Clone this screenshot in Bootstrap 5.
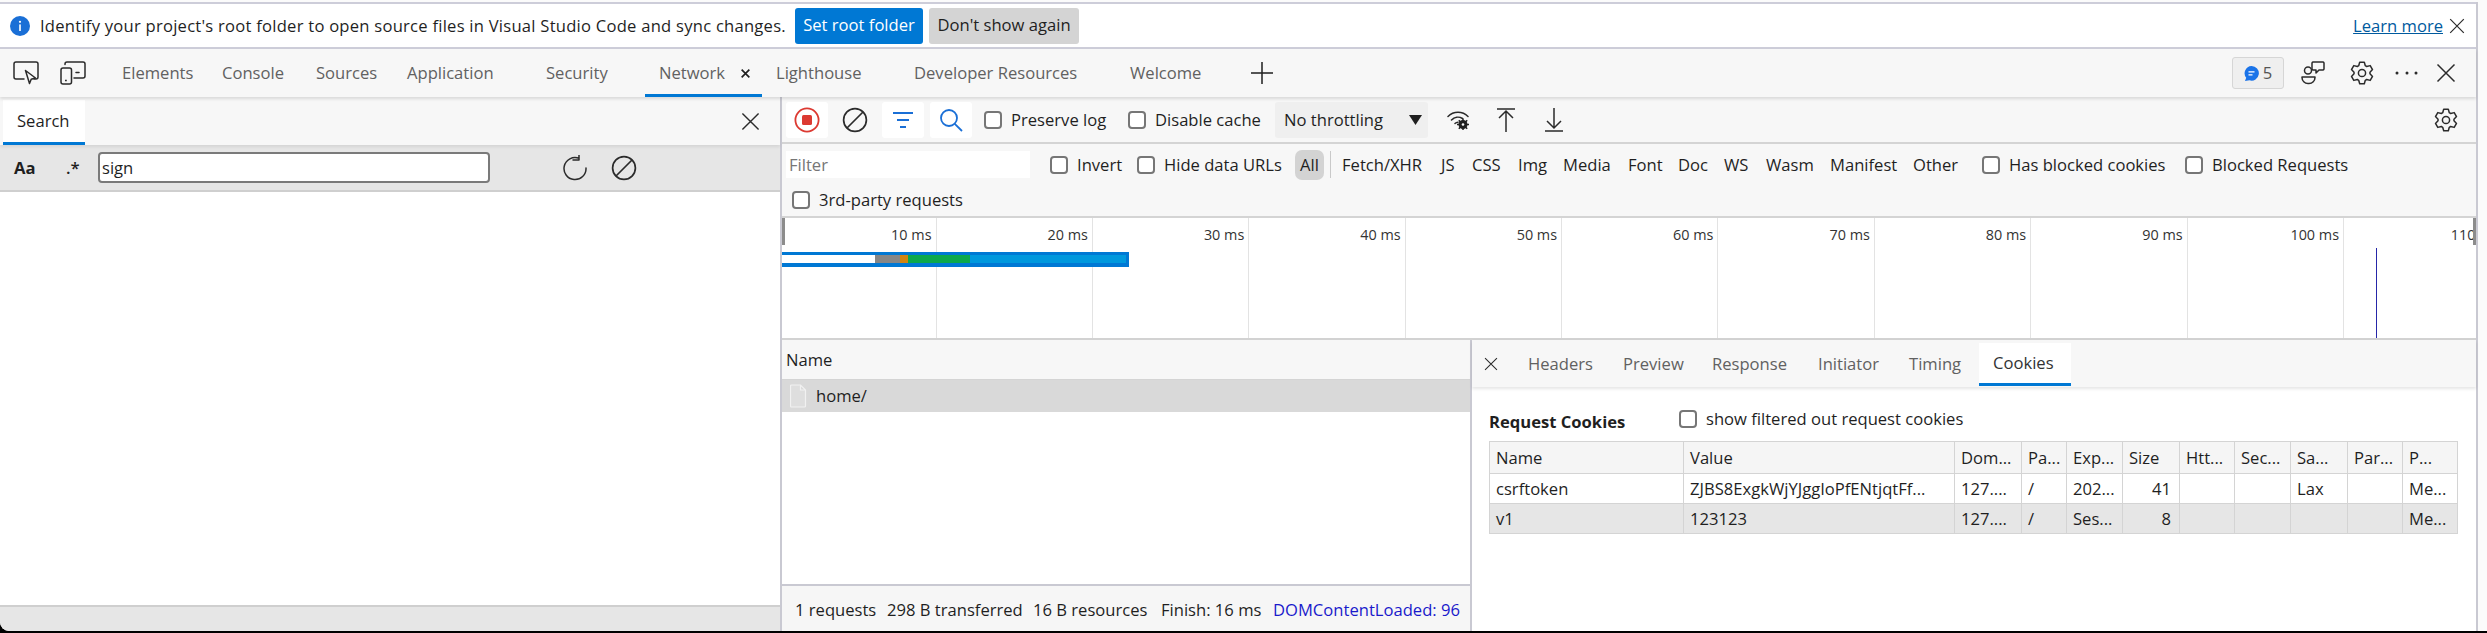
<!DOCTYPE html>
<html lang="en">
<head>
<meta charset="utf-8">
<title>DevTools</title>
<link rel="stylesheet" href="https://cdn.jsdelivr.net/npm/bootstrap@5.3.0/dist/css/bootstrap.min.css">
<style>
html,body{height:633px;overflow:hidden}
body{background:#000;font-family:"Open Sans","Liberation Sans",sans-serif;font-size:16.6px;color:#1f1f1f;line-height:1.2}
.canvas{width:2487px;height:631px;background:#fbfbfb;border-bottom-left-radius:9px;overflow:hidden}
.tool{width:2478px;height:629px;border-right:2px solid #c9c9d2;margin-top:2px;display:flex;flex-direction:column}
.nw{white-space:nowrap}
.infobar{height:47px;background:#fff;border-top:2px solid #cdcdd9;border-bottom:2px solid #cdcdd9;padding-left:10px;flex:none}
.info-txt{width:755px;margin-left:10px;letter-spacing:.24px}
.btn.act-main,.btn.act-sec{height:36px;padding:0;border:0;border-radius:3px;font-size:16.6px;color:#fff;background:#0078d4}
.btn.act-main{width:128px;margin-right:6px}
.btn.act-sec{width:150px;background:#d4d4d4;color:#1f1f1f}
.learn{color:#005a9e;text-decoration:underline;margin-right:6px}
.infox{margin-right:11px}
.tabstrip{height:48px;background:#f7f7f7;padding-left:13px;box-shadow:0 2px 3px rgba(0,0,0,.12);position:relative;z-index:2;flex:none}
.dtab{color:#616161;height:100%;display:flex;align-items:center;white-space:nowrap;flex:none}
.w47{width:47px}.w62{width:62px}.w100{width:100px}.w94{width:94px}.w91{width:91px}.w139{width:139px}.w99{width:99px}.w138{width:138px}.w216{width:216px}.w121{width:121px}
.dtab-on{width:117px;padding-left:14px;margin-right:14px;border-bottom:3px solid #0078d4;padding-top:3px;justify-content:space-between;padding-right:11px}
.issue-box{width:52px;height:32px;background:#efefef;border:1px solid #d6d6d6;border-radius:3px;color:#555}
.ml17{margin-left:17px}.ml25{margin-left:25px}.ml20{margin-left:20px}.ml18{margin-left:18px}
.mr20{margin-right:20px}.mr18{margin-right:18px}
.panes{flex:1;min-height:0}
.leftpane{width:780px;flex:none}
.striph{height:48px;background:#f7f7f7;padding-left:3px;padding-right:20px;box-shadow:0 2px 3px rgba(0,0,0,.08);position:relative;z-index:1;flex:none}
.search-tab{width:82px;height:45px;background:#fff;margin-top:3px;border-bottom:3px solid #0078d4;padding-left:14px;display:flex;align-items:center}
.searchbar{height:47px;background:#e6e6e6;border-bottom:2px solid #cfcfcf;padding-left:14px;flex:none}
.aa{font-weight:700;width:52px}.rx{width:32px;font-weight:600}
.sinput{width:392px;height:31px;border:2px solid #7a7a7a;border-radius:4px;background:#fff;padding:0 0 0 2px;margin-right:72px;font:inherit;color:#1f1f1f;outline:0}
.ml23{margin-left:23px}
.leftbody{flex:1;background:#fff}
.leftfoot{height:26px;background:#e6e6e6;border-top:2px solid #cfcfcf;flex:none}
.rightpane{flex:1;border-left:2px solid #c9c9d2;min-width:0;background:#f7f7f7}
.nettool{height:47px;background:#f7f7f7;border-bottom:2px solid #d4d4d4;padding:5px 0 5px 4px;flex:none}
.ibox{width:42px;height:36px;background:#fff;border-radius:3px;flex:none}
.ibox-plain{background:transparent;margin-left:6px}
.ml6{margin-left:6px}.ml12{margin-left:12px}
.chk.form-check-input{width:18px;height:18px;margin:0;border:2px solid #767676;border-radius:4px;background-color:#fff;flex:none}
.chklab{display:flex;align-items:center;gap:9px;white-space:nowrap}
.w144{width:144px}.w147{width:147px}
.throttle{width:153px;height:36px;background:#efefef;border-radius:3px;padding:0 6px 0 9px;flex:none}
.wicon{margin-left:19px}.upicon{margin-left:26px}.dnicon{margin-left:30px}
.filterrows{height:74px;background:#f7f7f7;border-bottom:2px solid #d4d4d4;flex:none}
.frow1{height:38px;padding-left:4px;padding-top:3px}
.finput{width:244px;height:27px;background:#fff;border:0;padding:0 0 0 3px;margin-right:20px;font:inherit;outline:0}
.finput::placeholder{color:#767676;opacity:1}
.w87{width:87px}.w158{width:158px}
.allpill{width:29px;height:30px;background:#d3d3d3;border-radius:7px;display:flex;align-items:center;justify-content:center;flex:none}
.fsep{width:1px;height:27px;background:#c9c9c9;margin:0 11px 0 6px;flex:none}
.ft{white-space:nowrap;flex:none}
.f1{width:99px}.f2{width:31px}.f3{width:46px}.f4{width:45px}.f5{width:65px}.f6{width:50px}.f7{width:46px}.f8{width:42px}.f9{width:64px}.f10{width:83px}.f11{width:69px}
.w203{width:203px}
.frow2{padding-left:10px;height:34px;padding-top:1px}
.timeline{height:120px;background:#fff;flex:none;position:relative;overflow:hidden}
.tcells{height:100%;width:1900px}
.tcell{border-right:1px solid #e3e3e3;height:100%;flex:none;width:156.4px;text-align:right;padding:8px 4px 0 0;font-size:14.4px;color:#333;white-space:nowrap}
.tcell-first{width:154.5px}
.tcell-last{padding-right:0}
.grip{position:absolute;top:0;width:3px;height:27px;background:#8c8c8c}
.grip-l{left:0}.grip-r{right:0}
.wbar{position:absolute;left:0;top:34px;width:347px;height:15px;background:#0078d4;padding:3px 3px 4px 0;display:flex}
.seg-w{width:93px;background:#fff}.seg-g{width:25px;background:#868686}.seg-o{width:8px;background:#d28410}.seg-gr{width:62px;background:#0ca84c}.seg-b{flex:1;background:#0098dd}
.vline{position:absolute;left:1594px;top:30px;width:1px;height:90px;background:#2626a8}
.lower{flex:1;min-height:0;border-top:2px solid #d2d2d2;background:#fff}
.listpane{width:688px;flex:none}
.lhead{height:40px;background:#f7f7f7;border-bottom:1px solid #d4d4d4;padding-left:4px;flex:none}
.lrow{height:32px;background:#d9d9d9;padding-left:8px;flex:none}
.lrow svg{margin-right:9px}
.lfill{flex:1}
.lfoot{height:47px;background:#f6f6f6;border-top:2px solid #c9c9d2;padding:3px 0 0 13px;flex:none;overflow:hidden}
.lfoot span{flex:none;white-space:nowrap}
.fa1{width:92px}.fa2{width:146px}.fa3{width:128px}.fa4{width:112px}
.dcl{color:#1a1acb}
.detail{flex:1;border-left:2px solid #c9c9d2;min-width:0}
.dtabs{height:47px;background:#f7f7f7;box-shadow:0 2px 3px rgba(0,0,0,.1);position:relative;padding-left:12px;flex:none}
.dx{width:44px}
.dd1{width:95px}.dd2{width:89px}.dd3{width:106px}.dd4{width:91px}.dd5{width:70px}
.dd-on{width:92px;height:43px;margin-top:2px;background:#fff;border-bottom:3px solid #0078d4;padding-left:14px;color:#333}
.reqhead{height:54px;padding:10px 0 0 17px}
.reqtitle{font-weight:700;width:190px;padding-top:5px}
.ckwrap{padding-left:17px}
table.table.cktable{width:968px;table-layout:fixed;margin:0;border:1px solid #d4d4d4;font-size:16.6px;color:#1f1f1f;--bs-table-bg:transparent}
table.cktable th,table.cktable td{padding:0 0 0 6px;border:1px solid #d4d4d4;font-weight:400;white-space:nowrap;overflow:hidden;vertical-align:middle}
table.cktable thead tr{height:32px;background:#f5f5f5}
table.cktable tbody tr{height:30px}
table.cktable tbody tr.cksel{background:#e6e6e6}
table.cktable td.rgt{text-align:right;padding:0 8px 0 0}
.c1{width:194px}.c2{width:271px}.c3{width:67px}.c4{width:45px}.c5{width:56px}.c6{width:57px}.c7{width:55px}.c8{width:56px}.c9{width:57px}.c10{width:55px}.c11{width:55px}
svg{display:block;flex:none}
.sk{fill:none;stroke:#2b2b2b;stroke-width:1.5;stroke-linecap:round;stroke-linejoin:round}
</style>
</head>
<body>
<svg width="0" height="0" class="position-absolute">
  <symbol id="gear" viewBox="0 0 24 24"><path class="sk" d="M9.7 1.2H14.3L15.3 4.7 16.67 5.49 20.2 4.61 22.5 8.59 19.97 11.21V12.79L22.5 15.41 20.2 19.39 16.67 18.51 15.3 19.3 14.3 22.8H9.7L8.7 19.3 7.33 18.51 3.8 19.39 1.5 15.41 4.03 12.79V11.21L1.5 8.59 3.8 4.61 7.33 5.49 8.7 4.7Z"/><circle class="sk" cx="12" cy="12" r="3.6"/></symbol>
  <symbol id="clear" viewBox="0 0 26 26"><circle cx="13" cy="13" r="11.4" fill="none" stroke="#2b2b2b" stroke-width="1.7"/><path d="M5 21 21 5" stroke="#2b2b2b" stroke-width="1.7"/></symbol>
  <symbol id="cross" viewBox="0 0 20 20"><path d="M1.5 1.5 18.5 18.5M18.5 1.5 1.5 18.5" stroke="#2b2b2b" stroke-width="1.5" fill="none"/></symbol>
</svg>
<div class="canvas">
<div class="tool">

  <div class="infobar d-flex align-items-center">
    <svg width="20" height="20" viewBox="0 0 20 20"><circle cx="10" cy="10" r="10" fill="#1a6fd6"/><circle cx="10" cy="5.8" r="1.1" fill="#fff"/><rect x="9.2" y="8.4" width="1.6" height="6.6" fill="#fff"/></svg>
    <span class="info-txt nw">Identify your project's root folder to open source files in Visual Studio Code and sync changes.</span>
    <button type="button" class="btn act-main">Set root folder</button>
    <button type="button" class="btn act-sec">Don't show again</button>
    <a href="#" class="learn ms-auto nw">Learn more</a>
    <svg class="infox" width="16" height="16" viewBox="0 0 20 20"><use href="#cross"/></svg>
  </div>

  <div class="tabstrip d-flex align-items-center">
    <div class="w47"><svg width="26" height="24" viewBox="0 0 26 24"><path class="sk" d="M11 18H3a2 2 0 0 1-2-2V3a2 2 0 0 1 2-2h20a2 2 0 0 1 2 2v13a2 2 0 0 1-2 2h-2"/><path d="M12.5 9.5 22.5 17l-4.300 1.200-1.700 4.300z" fill="#f7f7f7" stroke="#2b2b2b" stroke-width="1.500" stroke-linejoin="round"/></svg></div>
    <div class="w62"><svg width="26" height="24" viewBox="0 0 26 24"><path class="sk" d="M5 3.500V3a2 2 0 0 1 2-2h16a2 2 0 0 1 2 2v12a2 2 0 0 1-2 2H14M16 11.500h3"/><rect class="sk" x="1" y="7" width="10.500" height="16" rx="2"/><path d="M5 19.500h1.800" stroke="#2b2b2b" stroke-width="1.500"/></svg></div>
    <div class="dtab w100">Elements</div>
    <div class="dtab w94">Console</div>
    <div class="dtab w91">Sources</div>
    <div class="dtab w139">Application</div>
    <div class="dtab w99">Security</div>
    <div class="dtab dtab-on">Network<svg width="11" height="11" viewBox="0 0 20 20"><path d="M3 3 17 17M17 3 3 17" stroke="#1f1f1f" stroke-width="3"/></svg></div>
    <div class="dtab w138">Lighthouse</div>
    <div class="dtab w216">Developer Resources</div>
    <div class="dtab w121">Welcome</div>
    <svg width="22" height="22" viewBox="0 0 22 22"><path d="M11 0V22M0 11H22" stroke="#1f1f1f" stroke-width="1.500"/></svg>
    <div class="ms-auto d-flex align-items-center">
      <div class="issue-box d-flex align-items-center justify-content-center gap-1">
        <svg width="15" height="15" viewBox="0 0 15 15"><path d="M7.500 0a7.300 7.300 0 1 1-2 14.300L1 15l1.200-3.200A7.300 7.300 0 0 1 7.500 0z" fill="#1a73e8"/><path d="M4.500 5.800h6M4.500 8.800h4" stroke="#fff" stroke-width="1.200"/></svg>
        <span>5</span>
      </div>
      <svg class="ml17" width="24" height="24" viewBox="0 0 24 24"><circle class="sk" cx="7" cy="9.500" r="3.500"/><path class="sk" d="M1 16h13v.5a6 6 0 0 1-6 6H7a6 6 0 0 1-6-6z"/><path class="sk" d="M12 1h10a1.500 1.500 0 0 1 1 1v6a1.500 1.500 0 0 1-1 1h-4l-3 3v-3h-3a1.500 1.500 0 0 1-1-1V2a1.500 1.500 0 0 1 1-1z"/></svg>
      <svg class="ml25" width="24" height="24"><use href="#gear"/></svg>
      <svg class="ml20" width="24" height="6" viewBox="0 0 24 6"><circle cx="3" cy="3" r="1.500" fill="#2b2b2b"/><circle cx="13" cy="3" r="1.500" fill="#2b2b2b"/><circle cx="22" cy="3" r="1.500" fill="#2b2b2b"/></svg>
      <svg class="ml18 mr20" width="20" height="20"><use href="#cross"/></svg>
    </div>
  </div>

  <div class="panes d-flex">
    <div class="leftpane d-flex flex-column">
      <div class="striph d-flex align-items-center justify-content-between">
        <div class="search-tab">Search</div>
        <svg width="19" height="19" viewBox="0 0 20 20"><use href="#cross"/></svg>
      </div>
      <div class="searchbar d-flex align-items-center">
        <span class="aa">Aa</span><span class="rx">.*</span>
        <input class="sinput" type="text" value="sign">
        <svg width="26" height="26" viewBox="0 0 26 26"><path class="sk" d="M17 3.300A11 11 0 1 0 24 13M17 0v5h-6"/></svg>
        <svg class="ml23" width="26" height="26"><use href="#clear"/></svg>
      </div>
      <div class="leftbody"></div>
      <div class="leftfoot"></div>
    </div>

    <div class="rightpane d-flex flex-column">
      <div class="nettool d-flex align-items-center">
        <div class="ibox d-flex align-items-center justify-content-center"><svg width="26" height="26" viewBox="0 0 26 26"><circle cx="13" cy="13" r="11.600" fill="none" stroke="#dc3a32" stroke-width="1.800"/><rect x="8" y="8" width="10" height="10" rx="1.500" fill="#dc3a32"/></svg></div>
        <div class="ibox ibox-plain d-flex align-items-center justify-content-center"><svg width="26" height="26"><use href="#clear"/></svg></div>
        <div class="ibox ml6 d-flex align-items-center justify-content-center"><svg width="22" height="18" viewBox="0 0 22 18"><path d="M1 2H21M5 9H17M8 16H14" stroke="#1a6fd6" stroke-width="2"/></svg></div>
        <div class="ibox ml6 d-flex align-items-center justify-content-center"><svg width="24" height="24" viewBox="0 0 24 24"><circle cx="10" cy="10" r="8" fill="none" stroke="#1a6fd6" stroke-width="1.800"/><path d="M15.800 15.800 23 23" stroke="#1a6fd6" stroke-width="1.800"/></svg></div>
        <label class="chklab w144 ml12"><input class="chk form-check-input" type="checkbox">Preserve log</label>
        <label class="chklab w147"><input class="chk form-check-input" type="checkbox">Disable cache</label>
        <div class="throttle d-flex align-items-center justify-content-between nw">No throttling<svg width="13" height="10" viewBox="0 0 13 10"><path d="M0 0H13L6.500 10z" fill="#1f1f1f"/></svg></div>
        <svg class="wicon" width="24" height="20" viewBox="0 0 24 20"><path class="sk" d="M1 6.500a14 14 0 0 1 20 0M4.500 10a9 9 0 0 1 11-1.500M8 13.500a4 4 0 0 1 3-1.300"/><circle cx="16" cy="14.500" r="4.500" fill="#1f1f1f"/><path d="M16 8.500v12M10 14.500h12M11.800 10.300l8.400 8.400M20.200 10.300l-8.400 8.400" stroke="#1f1f1f" stroke-width="1.500"/><circle cx="16" cy="14.500" r="1.300" fill="#f7f7f7"/></svg>
        <svg class="upicon" width="18" height="24" viewBox="0 0 18 24"><path d="M0 1H18M9 24V3M2 10 9 3l7 7" fill="none" stroke="#2b2b2b" stroke-width="1.500"/></svg>
        <svg class="dnicon" width="18" height="24" viewBox="0 0 18 24"><path d="M0 23H18M9 0V20M2 13l7 7 7-7" fill="none" stroke="#2b2b2b" stroke-width="1.500"/></svg>
        <svg class="ms-auto mr18" width="24" height="24"><use href="#gear"/></svg>
      </div>

      <div class="filterrows">
        <div class="frow1 d-flex align-items-center">
          <input class="finput" type="text" placeholder="Filter">
          <label class="chklab w87"><input class="chk form-check-input" type="checkbox">Invert</label>
          <label class="chklab w158"><input class="chk form-check-input" type="checkbox">Hide data URLs</label>
          <span class="allpill">All</span><span class="fsep"></span>
          <span class="ft f1">Fetch/XHR</span><span class="ft f2">JS</span><span class="ft f3">CSS</span><span class="ft f4">Img</span><span class="ft f5">Media</span><span class="ft f6">Font</span><span class="ft f7">Doc</span><span class="ft f8">WS</span><span class="ft f9">Wasm</span><span class="ft f10">Manifest</span><span class="ft f11">Other</span>
          <label class="chklab w203"><input class="chk form-check-input" type="checkbox">Has blocked cookies</label>
          <label class="chklab"><input class="chk form-check-input" type="checkbox">Blocked Requests</label>
        </div>
        <div class="frow2 d-flex align-items-center">
          <label class="chklab"><input class="chk form-check-input" type="checkbox">3rd-party requests</label>
        </div>
      </div>

      <div class="timeline">
        <div class="tcells d-flex">
          <div class="tcell tcell-first">10 ms</div><div class="tcell">20 ms</div><div class="tcell">30 ms</div><div class="tcell">40 ms</div><div class="tcell">50 ms</div><div class="tcell">60 ms</div><div class="tcell">70 ms</div><div class="tcell">80 ms</div><div class="tcell">90 ms</div><div class="tcell">100 ms</div><div class="tcell tcell-last">110 ms</div>
        </div>
        <div class="grip grip-l"></div><div class="grip grip-r"></div>
        <div class="wbar"><div class="seg-w"></div><div class="seg-g"></div><div class="seg-o"></div><div class="seg-gr"></div><div class="seg-b"></div></div>
        <div class="vline"></div>
      </div>

      <div class="lower d-flex">
        <div class="listpane d-flex flex-column">
          <div class="lhead d-flex align-items-center">Name</div>
          <div class="lrow d-flex align-items-center"><svg width="17" height="24" viewBox="0 0 17 24"><path d="M1.500 1h9l5 5v16a1 1 0 0 1-1 1h-13a1 1 0 0 1-1-1V2a1 1 0 0 1 1-1zM10.500 1v5h5" fill="#dedede" stroke="#f1f1f1" stroke-width="1.200"/></svg>home/</div>
          <div class="lfill"></div>
          <div class="lfoot d-flex align-items-center">
            <span class="fa1">1 requests</span><span class="fa2">298 B transferred</span><span class="fa3">16 B resources</span><span class="fa4">Finish: 16 ms</span><span class="dcl">DOMContentLoaded: 96</span>
          </div>
        </div>
        <div class="detail d-flex flex-column">
          <div class="dtabs d-flex align-items-center">
            <div class="dx"><svg width="14" height="14" viewBox="0 0 20 20"><use href="#cross"/></svg></div>
            <div class="dtab dd1">Headers</div>
            <div class="dtab dd2">Preview</div>
            <div class="dtab dd3">Response</div>
            <div class="dtab dd4">Initiator</div>
            <div class="dtab dd5">Timing</div>
            <div class="dtab dd-on">Cookies</div>
          </div>
          <div class="reqhead d-flex align-items-center">
            <span class="reqtitle nw">Request Cookies</span>
            <label class="chklab"><input class="chk form-check-input" type="checkbox">show filtered out request cookies</label>
          </div>
          <div class="ckwrap">
            <table class="table cktable">
              <colgroup><col class="c1"><col class="c2"><col class="c3"><col class="c4"><col class="c5"><col class="c6"><col class="c7"><col class="c8"><col class="c9"><col class="c10"><col class="c11"></colgroup>
              <thead><tr><th>Name</th><th>Value</th><th>Dom...</th><th>Pa...</th><th>Exp...</th><th>Size</th><th>Htt...</th><th>Sec...</th><th>Sa...</th><th>Par...</th><th>P...</th></tr></thead>
              <tbody>
                <tr><td>csrftoken</td><td>ZJBS8ExgkWjYJggIoPfENtjqtFf...</td><td>127....</td><td>/</td><td>202...</td><td class="rgt">41</td><td></td><td></td><td>Lax</td><td></td><td>Me...</td></tr>
                <tr class="cksel"><td>v1</td><td>123123</td><td>127....</td><td>/</td><td>Ses...</td><td class="rgt">8</td><td></td><td></td><td></td><td></td><td>Me...</td></tr>
              </tbody>
            </table>
          </div>
        </div>
      </div>
    </div>
  </div>

</div>
</div>
<script src="https://cdn.jsdelivr.net/npm/bootstrap@5.3.0/dist/js/bootstrap.bundle.min.js"></script>
</body>
</html>
